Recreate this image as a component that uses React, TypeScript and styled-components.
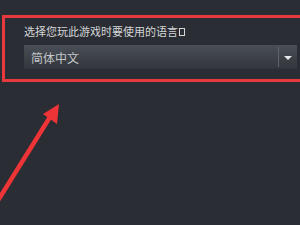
import * as React from 'react';
import styled, { createGlobalStyle } from 'styled-components';

const GlobalStyle = createGlobalStyle`
  html, body {
    margin: 0;
    padding: 0;
    background: #2a2d33;
    overflow: hidden;
  }
  body {
    font-family: "Noto Sans CJK SC", "Noto Sans", sans-serif;
  }
`;

const Page = styled.div`
  position: relative;
  width: 300px;
  height: 225px;
  padding-top: 15px;
  padding-left: 2px;
  box-sizing: border-box;
  overflow: hidden;
`;

const Highlight = styled.div`
  width: 310px;
  height: 67px;
  box-sizing: border-box;
  border: 3px solid #e8393e;
  border-right: none;
  padding: 5px 0 0 19px;
`;

const Label = styled.div`
  font-size: 11px;
  line-height: 16px;
  color: #d4d6d8;
  margin-bottom: 6px;
  display: flex;
  align-items: center;
`;

const Tofu = styled.span`
  display: inline-block;
  width: 4px;
  height: 6px;
  border: 1px solid #d4d6d8;
  margin-left: 1px;
  margin-top: 2px;
`;

const Select = styled.div`
  width: 273px;
  height: 24px;
  display: flex;
  align-items: stretch;
  background: linear-gradient(to bottom, #4a4e56 0%, #3c4047 55%, #33363c 100%);
`;

const Value = styled.div`
  flex: 1;
  font-size: 12px;
  line-height: 26px;
  color: #c3c6c9;
  padding-left: 7px;
`;

const Divider = styled.div`
  width: 1px;
  margin: 2px 0;
  background: #5f646c;
`;

const Toggle = styled.div`
  width: 18px;
  display: flex;
  align-items: center;
  justify-content: center;
  padding-top: 1px;
`;

const Caret = styled.span`
  width: 0;
  height: 0;
  border-left: 4px solid transparent;
  border-right: 4px solid transparent;
  border-top: 4px solid #e6e8ea;
`;

const Annotation = styled.svg`
  position: absolute;
  left: 0;
  top: 0;
  pointer-events: none;
`;

export default function App() {
  return (
    <>
      <GlobalStyle />
      <Page>
        <Highlight>
          <Label>
            选择您玩此游戏时要使用的语言<Tofu />
          </Label>
          <Select>
            <Value>简体中文</Value>
            <Divider />
            <Toggle>
              <Caret />
            </Toggle>
          </Select>
        </Highlight>
        <Annotation width="300" height="225" viewBox="0 0 300 225">
          <line x1="-3" y1="202" x2="50" y2="117" stroke="#ee3436" strokeWidth="4.5" strokeLinecap="butt" />
          <polygon points="59,104 57,124 43,114" fill="#ee3436" />
        </Annotation>
      </Page>
    </>
  );
}
